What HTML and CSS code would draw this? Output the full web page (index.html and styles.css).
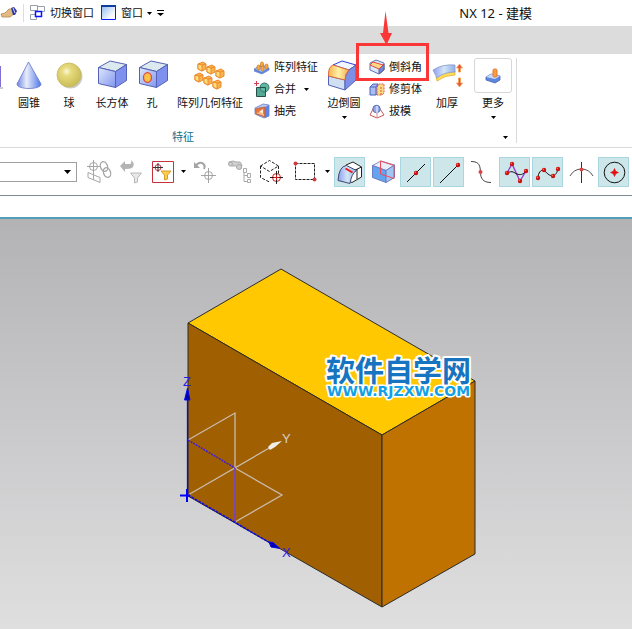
FILE: index.html
```html
<!DOCTYPE html>
<html lang="zh-CN">
<head>
  <meta charset="UTF-8">
  <meta name="viewport" content="width=device-width, initial-scale=1.0">
  <title>NX 12 - 建模</title>
  <link rel="stylesheet" href="styles.css">
</head>
<body>
  <!-- shared gradients and small shapes -->
  <svg class="defs" aria-hidden="true">
    <defs>
      <linearGradient id="coneFill"><stop offset="0" stop-color="#6f86e0"/><stop offset=".4" stop-color="#e8edfa"/><stop offset="1" stop-color="#4f78ea"/></linearGradient>
      <radialGradient id="ballFill" cx=".4" cy=".35" r=".65"><stop offset="0" stop-color="#fbf8d8"/><stop offset=".3" stop-color="#e6da7c"/><stop offset="1" stop-color="#c9bd58"/></radialGradient>
      <linearGradient id="blueFace" x1="0" y1="0" x2="1" y2="1"><stop offset="0" stop-color="#dfe8fc"/><stop offset="1" stop-color="#8095ee"/></linearGradient>
      <linearGradient id="goldFace"><stop offset="0" stop-color="#f9b54e"/><stop offset=".5" stop-color="#fff3a8"/><stop offset="1" stop-color="#f5a94a"/></linearGradient>
      <linearGradient id="sheetFace"><stop offset="0" stop-color="#8f9cf4"/><stop offset=".5" stop-color="#d3e6f4"/><stop offset="1" stop-color="#8fb0e8"/></linearGradient>
      <linearGradient id="winFill" x1="0" y1="0" x2="1" y2="1"><stop offset="0" stop-color="#8ab8ec"/><stop offset=".7" stop-color="#f4f8fe"/><stop offset="1" stop-color="#ffffff"/></linearGradient>
      <g id="miniCube" stroke="#ea8a2c" stroke-width="1" stroke-linejoin="round">
        <path d="M-4-2 1-4 4-2v5L0 5l-4-2z" fill="#fbb24c"/>
        <path d="M-4-2 0-1v6l-4-2z" fill="#fdde78"/>
        <path d="M0-1 4-2" fill="none"/>
      </g>
      <g id="redDot"><circle r="2.2" fill="#cc1010"/><circle cx="-.6" cy="-.6" r=".8" fill="#ff6a50"/></g>
    </defs>
  </svg>

  <header class="titlebar">
    <button class="quick" aria-label="手势">
      <svg width="17" height="16"><path d="m1 9 4-1 4-4h4l1 5-4 3H6l-4 0z" fill="#e3bb80" stroke="#b08a58" stroke-width=".8"/><path d="m11 3 3-1 3 4-2 4h-2z" fill="#2937a0"/><path d="m13 3 2 5" stroke="#d5d9ff"/></svg>
    </button>
    <span class="divider"></span>
    <button class="quick">
      <svg width="16" height="16" fill="#fff"><path d="M.5.500h7v5h-7zM7.500 1.500h7v5h-7zM.5 9.500h6v5h-6z" stroke="#97a0a8"/><path d="M5.500 6.500h6v5h-6z" stroke="#0b16ff" stroke-width="1.500"/></svg>
      切换窗口
    </button>
    <button class="quick window">
      <svg width="16" height="16"><path d="M.5.500h14v14H.5z" fill="url(#winFill)" stroke="#0a1cff"/><path d="M0 0h15v2H0z" fill="#123c9c"/></svg>
      窗口
      <svg class="caret" width="5" height="3"><path d="M0 0h5L2.500 3z"/></svg>
    </button>
    <button class="quick overflow" aria-label="自定义">
      <svg width="7" height="6"><path d="M0 0h7v1H0zM0 3h7L3.500 6z"/></svg>
    </button>
    <h1 class="title">NX 12 - 建模</h1>
  </header>

  <div class="tabs"></div>

  <section class="ribbon">
    <div class="group">
      <div class="commands">
        <button class="big cylinder" aria-label="圆柱"><svg width="4" height="35"><path d="M0 8h1v21H0z" fill="#7d71d6"/><path d="M0 30h3" stroke="#ccc" stroke-width="2"/></svg></button>
        <button class="big cone">
          <svg width="36" height="35"><path d="M17.500 4 6 26c0 6 24 6 24 0z" fill="url(#coneFill)" stroke="#6574c8" stroke-width=".8"/></svg>
          圆锥
        </button>
        <button class="big ball">
          <svg width="36" height="35"><circle cx="19.500" cy="18.500" r="12" fill="#ccc"/><circle cx="18" cy="17" r="12" fill="url(#ballFill)" stroke="#c4b95e" stroke-width=".8"/></svg>
          球
        </button>
        <button class="big block">
          <svg width="36" height="35" stroke="#5561b4" stroke-linejoin="round"><path d="m4.500 9.500 11.500-6.500 16.500 3.500-11 7z" fill="#dceaf0"/><path d="m4.500 9.500 17 4v16l-17-4z" fill="url(#blueFace)"/><path d="m21.500 13.500 11-7v16l-11 7z" fill="#7f91ef"/></svg>
          长方体
        </button>
        <button class="big hole">
          <svg width="36" height="35" stroke="#5561b4" stroke-linejoin="round"><path d="m5.500 9.500 11.500-6.500 16.500 3.500-11 7z" fill="#dceaf0"/><path d="m5.500 9.500 17 4v16l-17-4z" fill="url(#blueFace)"/><path d="m22.500 13.500 11-7v16l-11 7z" fill="#7f91ef"/><ellipse cx="13.500" cy="19.500" rx="4" ry="4.800" fill="#fbc245" stroke="#e2483c" stroke-width="1.300"/></svg>
          孔
        </button>
        <button class="big pattern">
          <svg width="36" height="35"><use href="#miniCube" x="10" y="8"/><use href="#miniCube" x="19" y="11"/><use href="#miniCube" x="28" y="15"/><use href="#miniCube" x="7" y="19"/><use href="#miniCube" x="16" y="22"/><use href="#miniCube" x="25" y="26"/></svg>
          阵列几何特征
        </button>

        <div class="stack stack-feature">
          <button class="small">
            <svg width="16" height="16"><path d="m0 10 8-4 7 3v2l-7 4-8-3z" fill="#5b82dc" stroke="#6f8bd0" stroke-width=".8"/><path d="m1 10 7-3 6 2-6 4z" fill="#b4c9f4"/><g fill="#f9a83a" stroke="#c87522" stroke-width=".7"><rect x="6.500" y="3" width="3" height="5" rx="1.500"/><rect x="3" y="6" width="3" height="5" rx="1.500"/><rect x="7" y="7" width="3" height="5" rx="1.500"/><rect x="11" y="5" width="3" height="5" rx="1.500"/></g></svg>
            阵列特征
          </button>
          <button class="small">
            <svg width="16" height="16"><path d="M2.500 6.500h9v9h-9z" fill="#54a995" stroke="#264e48"/><circle cx="10.500" cy="6.500" r="4.500" fill="#5db7a0" stroke="#3d6e68"/><path d="M6 6.500h5.500V11" fill="none" stroke="#264e48"/><path d="M0 2.500h5M2.500 0v5" stroke="#d43b50"/></svg>
            合并
            <svg class="caret caret-gap" width="5" height="3"><path d="M0 0h5L2.500 3z"/></svg>
          </button>
          <button class="small">
            <svg width="16" height="16" stroke-linejoin="round"><path d="m1 5 8-4 6 1v11l-5 2-9-4z" fill="#b8ccf2" stroke="#6a7cc4" stroke-width=".8"/><path d="m11 4 4-2v11l-4 2z" fill="#5f82e4"/><path d="M1.500 6 5 5l6-1v10l-9-3z" fill="#e8753c" stroke="#b0604c" stroke-width=".8"/><path d="m5 9 4-3v5z" fill="#fff0d8"/><path d="m2 10 4-1 4 2v2z" fill="#f8bf84"/></svg>
            抽壳
          </button>
        </div>

        <button class="big edge">
          <svg width="36" height="35" stroke-linejoin="round"><path d="m7 7 9-4 14 4-7 5z" fill="#f2f6ff" stroke="#2a3fe0"/><path d="m2.500 18 16.500 4v10L2.500 27z" fill="#cfe0f2" stroke="#5361b8"/><path d="M19 22q0-6 4-10l7-5v15l-11 10z" fill="#7e90e6" stroke="#5361b8"/><path d="M2.500 18Q2 9 7 7l16 5q-4 3-4 10z" fill="url(#goldFace)" stroke="#dc6a3e"/></svg>
          边倒圆
          <svg class="caret" width="5" height="3"><path d="M0 0h5L2.500 3z"/></svg>
        </button>

        <div class="stack stack-detail">
          <button class="small chamfer">
            <svg width="16" height="16" stroke-linejoin="round"><path d="m1 4 6-3 8 3v7l-5 4-9-4z" fill="#dce8fb" stroke="#6373b0"/><path d="m10 9 5-4v6l-5 4z" fill="#7185d0" stroke="#596497"/><path d="m1 6 3-3 10 3-4 4z" fill="#ffd88a" stroke="#df4b43"/></svg>
            倒斜角
            <span class="callout">
              <svg class="callout-arrow" width="14" height="34"><path d="m6.500 0 3 22H13L7.500 34 1 22h3z" fill="#fb3636"/></svg>
            </span>
          </button>
          <button class="small">
            <svg width="16" height="16"><path d="m1 6 3-3h5v9l-2 2H1z" fill="#a9bdf2" stroke="#4d62c2"/><path d="M1 6h6v8M7 6l2-3" fill="none" stroke="#4d62c2"/><path d="m8 6 2-3h5v9l-2 2H8z" fill="#fbdb82" stroke="#da5844" stroke-dasharray="2 1"/><path d="M12 6v8" stroke="#da5844" stroke-dasharray="2 1"/></svg>
            修剪体
          </button>
          <button class="small">
            <svg width="16" height="16" fill="none"><path d="M4 6 1 12l7 3 7-3-4-6" fill="#fff" stroke="#c65a52"/><path d="M8 9v6" stroke="#d98c85"/><circle cx="7.500" cy="6" r="3.700" fill="#92a9ee" stroke="#5b6ab0"/><path d="M8 3v7" stroke="#fff"/></svg>
            拔模
          </button>
        </div>

        <button class="big thicken">
          <svg width="36" height="35"><path d="m7 19 1 4q8-6 18-6v-4q-11 1-19 6z" fill="#ffdc50" stroke="#e2b034" stroke-width=".8"/><path d="M4 12q9-6 22-5v7q-11 0-18 6z" fill="url(#sheetFace)" stroke="#8a98cc" stroke-width=".8"/><path d="m30.500 6 3 4h-2v4h-2v-4h-2zM30.500 29l3-4h-2v-5h-2v5h-2z" fill="#e45345" stroke="#f2a14c" stroke-width=".8"/></svg>
          加厚
        </button>
        <button class="big more">
          <span class="gallery"><svg width="16" height="16"><path d="m1 9 5-3 9 2v4l-5 3-9-3z" fill="#5f86de" stroke="#4a64ae" stroke-width=".8"/><path d="m1 9 9 2 5-3-9-2z" fill="#c9daf8"/><rect x="8" y="1" width="4" height="8" rx="1.500" fill="#f99d42" stroke="#e9742a"/></svg></span>
          更多
          <svg class="caret" width="5" height="3"><path d="M0 0h5L2.500 3z"/></svg>
        </button>
      </div>
      <div class="group-foot">
        <span class="group-name">特征</span>
        <button class="launcher" aria-label="特征选项"><svg class="caret" width="5" height="3"><path d="M0 0h5L2.500 3z"/></svg></button>
      </div>
    </div>
  </section>

  <nav class="toolbar">
    <select class="scope" aria-label="选择范围"><option></option></select>

    <button class="tool first" aria-label="关联"><svg width="31" height="30" fill="none" stroke="#a6a6a6"><path d="M9.500 3v18M3 9.500h13"/><circle cx="9.500" cy="9.500" r="4"/><path d="m4 15.500 12 5v5l-12-5z"/><path d="m9.500 18v5"/><g stroke-width="1.300"><ellipse cx="20" cy="9.500" rx="3.500" ry="5" transform="rotate(-20 20 9.500)"/><ellipse cx="23" cy="15.500" rx="3.500" ry="5" transform="rotate(-20 23 15.500)"/></g></svg></button>
    <button class="tool" aria-label="重置过滤器"><svg width="31" height="30"><path d="m4 9 5-5v3h5q2-1 1-4 5 4 1 8-2 1-7 1v3z" fill="#b4b4b4"/><path d="M14.500 16h11l-4 5v4l-3 1v-5z" fill="#e8e8e8" stroke="#b8b8b8"/></svg></button>
    <button class="tool filter" aria-label="过滤器"><svg width="31" height="30"><path d="M5.500 4.500h21v21h-21z" fill="#fff" stroke="#c9303e"/><circle cx="11" cy="10.500" r="3" fill="none" stroke="#c9303e"/><path d="M6 10.500h10M11 6v9" stroke="#333"/><path d="M14 14h10l-3.500 4v4l-3 1v-5z" fill="#ffcf4a" stroke="#d69c2a"/></svg></button>
    <button class="drop" aria-label="过滤器选项"><svg class="caret" width="5" height="3"><path d="M0 0h5L2.500 3z"/></svg></button>

    <button class="tool wide" aria-label="还原"><svg width="31" height="30" fill="none" stroke="#a4a4a4"><path d="M5 10q3-5 7-4 4 2 2 6" stroke-width="2"/><path d="m4 5v6h6z" fill="#a4a4a4" stroke="none"/><circle cx="18.500" cy="18.500" r="4"/><path d="M11 18.500h15M18.500 11v15"/></svg></button>
    <button class="tool wide" aria-label="查找"><svg width="31" height="30" fill="#d0d0d0" stroke="#aaa"><path d="m6 5 4-1 3 1 4 0 2 3-1 4-3-1-2-2-4 0-3-1z"/><circle cx="7.500" cy="7" r="2"/><circle cx="16" cy="10" r="2.500"/><path d="M20.500 11.500h3v4h-3zM24.500 16.500h3v4h-3zM24.500 22.500h3v3h-3zM21 16v8.500h3M21 18.500h3" fill="none"/></svg></button>
    <button class="tool wide" aria-label="选择体"><svg width="31" height="30" fill="none" stroke="#222"><path d="m4.500 9 9-5.500 9 5.500-9 5.500zM4.500 9v11.500l9 4.500M22.500 9v8" stroke-dasharray="3 1.500"/><circle cx="20.500" cy="20.500" r="4" stroke="#d41717"/><path d="M14 20.500h13M20.500 14v13"/><path d="M18 20.500h5M20.500 18v5" stroke="#d41717"/></svg></button>
    <button class="tool wide" aria-label="矩形选择"><svg width="31" height="30"><path d="M6.500 6.500h19v16h-19z" fill="none" stroke="#222" stroke-dasharray="3 1"/><circle cx="6.500" cy="6.500" r="2" fill="#cf3d3d"/><circle cx="25.500" cy="22.500" r="2" fill="#cf3d3d"/></svg></button>
    <button class="drop" aria-label="选择方式"><svg class="caret" width="5" height="3"><path d="M0 0h5L2.500 3z"/></svg></button>

    <div class="snaps">
      <button class="snap on" aria-label="面上的点"><svg width="31" height="30" stroke-linejoin="round"><path d="m12 8 7-3 8.500 5v10L18 25.500l-7-3z" fill="#fff" stroke="#222"/><path d="m19 14 8.500-4M23 12v10" stroke="#222" fill="none"/><path d="M4 23.500Q5 9 12.500 8.500l10 5q-5 3-6.500 13z" fill="url(#sheetFace)" stroke="#3f4c72"/><path d="m11.500 11.500 7 4" stroke="#f01414" stroke-width="2"/></svg></button>
      <button class="snap" aria-label="有界栅格"><svg width="31" height="30" stroke-linejoin="round"><path d="M5.500 8.500 14 4l13.500 4-8.500 5.500z" fill="#e8eefa" stroke="#8791c8"/><path d="M5.500 8.500 19 13.500v12l-13.500-5z" fill="#62a5ee" stroke="#6e7bc4"/><path d="m19 13.500 8.500-5.500v12.500l-8.500 5z" fill="#a0c6f2" stroke="#6e7bc4"/><path d="M13.500 4v13l13.500 4.500v-13z" fill="none" stroke="#f04858"/></svg></button>
      <button class="snap on" aria-label="中点"><svg width="31" height="30"><path d="M7 25 25 7" stroke="#111"/><use href="#redDot" x="16" y="16"/></svg></button>
      <button class="snap on" aria-label="端点"><svg width="31" height="30"><path d="M7 26 25 8" stroke="#111"/><use href="#redDot" x="25" y="8"/></svg></button>
      <button class="snap" aria-label="拐点"><svg width="31" height="30"><path d="M5 4.500c9 0 9 5 9.500 10.500 0 6 2 10.500 10.500 10.500" fill="none" stroke="#444"/><circle cx="14.500" cy="15" r="2" fill="#d44"/></svg></button>
      <button class="snap on" aria-label="控制点"><svg width="31" height="30"><path d="m8 16 5-9 8 17 6-10" fill="none" stroke="#9a35d0" stroke-width="1.300"/><path d="M8 16c6-3 7 0 10 1s6 1 9-3" fill="none" stroke="#111"/><use href="#redDot" x="8" y="16"/><use href="#redDot" x="13" y="7"/><use href="#redDot" x="21" y="24"/><use href="#redDot" x="27" y="14"/></svg></button>
      <button class="snap on" aria-label="极点"><svg width="31" height="30"><path d="M6 21c0-5 3-9 6-7.500 3 2 5 6 9 5 4-1 4-4 5-7" fill="none" stroke="#111"/><use href="#redDot" x="6" y="21"/><use href="#redDot" x="12" y="13"/><use href="#redDot" x="21" y="19"/><use href="#redDot" x="26" y="12"/></svg></button>
      <button class="snap" aria-label="交点"><svg width="31" height="30"><path d="M5 19q4-7 11.500-7T28 19" fill="none" stroke="#555"/><path d="M16.500 5v21" stroke="#333"/><circle cx="16.500" cy="12.500" r="2" fill="#d44"/></svg></button>
      <button class="snap on" aria-label="圆心"><svg width="31" height="30"><circle cx="16.500" cy="15.500" r="10.300" fill="none" stroke="#111"/><path d="m16.500 11.500 1.200 2.800 2.800 1.200-2.800 1.200-1.200 2.800-1.200-2.800-2.800-1.200 2.800-1.200z" fill="#e01010" stroke="#e01010" stroke-width=".6"/></svg></button>
    </div>
  </nav>

  <div class="cue"></div>

  <main class="viewport">
    <svg class="scene" viewBox="0 219 632 410" preserveAspectRatio="xMinYMin meet">
      <!-- solid block -->
      <g stroke="#2b2b2b" stroke-linejoin="round">
        <path d="m281 269 194 112-93 54-194-112z" fill="#ffc800"/>
        <path d="m188 323 194 112v172L188 496z" fill="#a05f00"/>
        <path d="m382 435 93-54v173l-93 53z" fill="#c07200"/>
      </g>

      <!-- datum planes -->
      <g fill="none" stroke="#c9bcae" stroke-width="1.300">
        <path d="m188 440 47-27v55M188 495l83-48M235 468l47 27-47 27"/>
        <path d="M235 468v54" stroke="#7a45c4" stroke-width="1.800"/>
        <path d="m188 440 47 28" stroke="#3b1ce0" stroke-width="1.500" stroke-dasharray="2 1"/>
      </g>

      <!-- axes -->
      <g stroke="#0a0ae0" fill="#0000b4">
        <path d="M187.500 398v97" stroke-width="1.300"/>
        <path d="m188 495 84 49" stroke-width="1.500" stroke-dasharray="3 1"/>
        <path d="M180 495.500h10M187 489v13" stroke="#0000ff" stroke-width="2"/>
        <path d="m187.500 388 2.500 12h-5.500zM269 542l2 5 9 1.500-7-6z"/>
      </g>
      <path d="m268 447 4-4 10-2-7 6-5 3z" fill="#f1eeea"/>
      <text class="axis axis-blue" x="183" y="386">Z</text>
      <text class="axis axis-light" x="282" y="443">Y</text>
      <text class="axis axis-blue" x="282" y="557">X</text>

      <text class="brand" x="326" y="382">软件自学网</text>
      <text class="brand-url" x="327" y="396">WWW.RJZXW.COM</text>
    </svg>
  </main>
</body>
</html>
```
FILE: styles.css
```css
* {
  box-sizing: border-box;
}
body {
  margin: 0;
  min-height: 100vh;
  display: flex;
  flex-direction: column;
  font-family: "Noto Sans", "Noto Sans CJK SC", sans-serif;
  font-size: 11px;
  line-height: 16px;
  color: #111;
  background: #fff;
  overflow-x: hidden;
}
button {
  border: none;
  background: none;
  padding: 0;
  font: inherit;
  color: inherit;
  white-space: nowrap;
  cursor: pointer;
}
svg {
  display: block;
  flex: none;
}
.defs {
  position: absolute;
  width: 0;
  height: 0;
}

/* title bar */
.titlebar {
  height: 26px;
  display: flex;
  align-items: center;
}
.quick {
  display: flex;
  align-items: center;
  gap: 4px;
}
.divider {
  width: 1px;
  height: 18px;
  margin: 0 6px;
  background: #ddd;
}
.window {
  margin-left: 7px;
}
.overflow {
  margin-left: 5px;
}
.title {
  margin: 0 100px 0 auto;
  font-size: 13px;
  font-weight: normal;
}
.tabs {
  height: 28px;
  background: #dcdcdc;
}

/* ribbon */
.ribbon {
  display: flex;
  height: 94px;
  border-bottom: 1px solid #d9d9d9;
}
.group {
  display: flex;
  flex-direction: column;
  width: 517px;
  margin: 4px 0;
  border-right: 1px solid #d9d9d9;
}
.commands {
  display: flex;
  height: 72px;
}
.big {
  display: flex;
  flex-direction: column;
  align-items: center;
  flex: none;
}
.big .caret {
  margin-top: 5px;
}
.big > svg:first-child,
.gallery {
  margin-bottom: 2px;
}
.cylinder {
  width: 8px;
  align-items: flex-start;
}
.cone {
  width: 42px;
}
.ball {
  width: 38px;
}
.block {
  width: 48px;
}
.hole {
  width: 32px;
}
.pattern {
  width: 84px;
}
.edge {
  width: 42px;
}
.thicken {
  width: 38px;
}
.more {
  width: 38px;
  margin-left: 8px;
}
.gallery {
  display: flex;
  align-items: center;
  justify-content: center;
  width: 38px;
  height: 35px;
  border: 1px solid #d6d6d6;
  border-radius: 3px;
}
.stack {
  display: flex;
  flex-direction: column;
  flex: none;
  margin-top: -2px;
}
.stack-feature {
  width: 71px;
  padding-left: 2px;
}
.stack-detail {
  width: 63px;
  padding-left: 4px;
}
.small {
  position: relative;
  display: flex;
  align-items: center;
  gap: 4px;
  height: 22px;
}
.caret-gap {
  margin-left: 4px;
}
.callout {
  position: absolute;
  top: -13px;
  left: -13px;
  width: 73px;
  height: 38px;
  border: 3px solid #fb3636;
  pointer-events: none;
}
.callout-arrow {
  position: absolute;
  top: -35px;
  left: 20px;
}
.group-foot {
  display: flex;
  align-items: center;
  height: 16px;
  padding-top: 4px;
}
.group-name {
  margin-left: 172px;
  color: #12708c;
}
.launcher {
  margin: 0 8px 0 auto;
}

/* selection toolbar */
.toolbar {
  display: flex;
  align-items: center;
  height: 48px;
  border-bottom: 1px solid #7d8c91;
}
.scope {
  appearance: none;
  width: 77px;
  height: 20px;
  margin: 0;
  border: 1px solid #a0a0a0;
  border-left: none;
  border-radius: 0;
  background: #fff url("data:image/svg+xml,%3Csvg width='7' height='4' xmlns='http://www.w3.org/2000/svg'%3E%3Cpath d='M0 0h7L3.5 4z'/%3E%3C/svg%3E") no-repeat right 5px center;
}
.tool,
.drop {
  display: flex;
  align-items: center;
  justify-content: center;
  flex: none;
  width: 32px;
  height: 30px;
}
.first {
  margin-left: 6px;
}
.filter {
  width: 30px;
}
.wide {
  width: 33px;
}
.drop {
  width: 12px;
}
.snaps {
  display: flex;
  gap: 2px;
  margin-left: 1px;
}
.snap {
  flex: none;
  width: 31px;
  height: 30px;
}
.snap.on {
  background: #cde6ea;
  box-shadow: inset 0 0 0 1px #a9d6e1;
}
.cue {
  height: 23px;
  border-bottom: 2px solid #529eb8;
}

/* model view */
.viewport {
  flex: 1;
  background: linear-gradient(#b3b3b5, #dfdfe0);
}
.scene {
  width: 100%;
}
.axis {
  font-family: "Liberation Sans", sans-serif;
  font-size: 13px;
}
.axis-blue {
  fill: #2a1ce8;
}
.axis-light {
  fill: #d8d0c8;
}
.brand,
.brand-url {
  stroke: #fff;
  stroke-width: 4px;
  stroke-linejoin: round;
  paint-order: stroke;
  font-weight: bold;
}
.brand {
  font-family: "Noto Sans CJK SC", sans-serif;
  font-size: 29px;
  fill: #1774c0;
}
.brand-url {
  font-family: "DejaVu Sans", sans-serif;
  font-size: 14px;
  stroke-width: 3px;
  fill: #14a0e6;
}
```
